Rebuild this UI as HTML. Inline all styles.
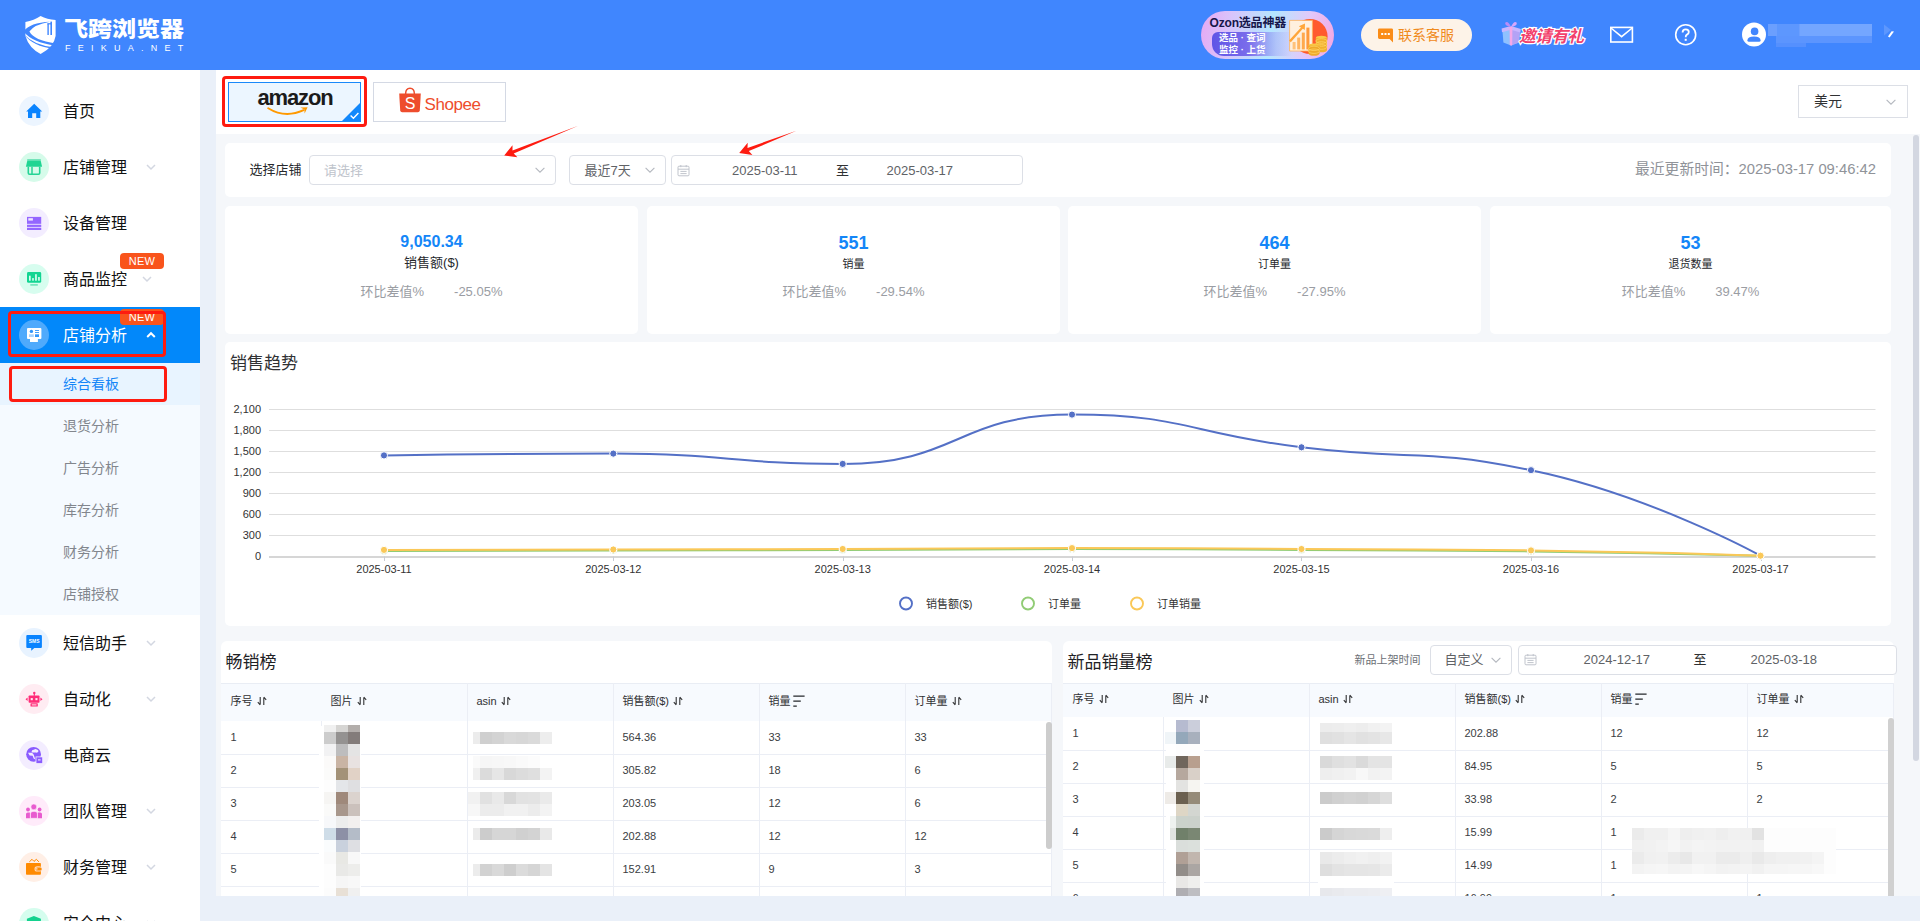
<!DOCTYPE html>
<html lang="zh-CN">
<head>
<meta charset="utf-8">
<title>飞跨浏览器 - 综合看板</title>
<style>
*{box-sizing:border-box;margin:0;padding:0}
html,body{width:1920px;height:921px;overflow:hidden}
body{position:relative;background:#eaf0f9;font-family:"Liberation Sans","Noto Sans CJK SC",sans-serif;color:#303133;font-size:13px}
.abs{position:absolute}
/* header */
#hd{position:absolute;left:0;top:0;width:1920px;height:70px;background:#4086fe}
#logo-cn{position:absolute;left:64px;top:12.2px;transform-origin:0 0;transform:scaleY(.875);font-size:24px;font-weight:900;color:#fff;letter-spacing:0;line-height:34px;white-space:nowrap;font-family:"Noto Sans CJK SC","Liberation Sans",sans-serif}
#logo-en{position:absolute;left:65px;top:40.5px;font-size:9px;color:#fff;letter-spacing:7.25px;line-height:14px;white-space:nowrap}
/* sidebar */
#sb{position:absolute;left:0;top:70px;width:200px;height:851px;background:#fff;overflow:hidden}
.mi{position:absolute;left:0;width:200px;height:56px}
.mi .ic{position:absolute;left:19px;top:13px;width:30px;height:30px;border-radius:50%}
.mi .ic svg{position:absolute;left:0;top:0;width:30px;height:30px}
.mi .tx{position:absolute;left:63px;top:17.3px;font-size:16px;line-height:24px;color:#111;white-space:nowrap}
.mi .ar{position:absolute;top:22px;width:12px;height:12px}
.mi.act{background:#0288fa}
.mi.act .tx{color:#fff}
.badge{position:absolute;left:120px;width:44px;height:16px;border-radius:4px;background:#f9541c;color:#fff;font-size:11px;line-height:16px;text-align:center;letter-spacing:.2px}
#sub{position:absolute;left:0;top:293px;width:200px;height:252px;background:#f5faff}
.si{position:absolute;left:0;width:200px;height:42px;font-size:14px;line-height:42px;padding-left:63px;color:#82868d;white-space:nowrap}
.si.on{background:#e8f4ff;color:#1486f8}
.redbox{position:absolute;border:3px solid #fe1b10;border-radius:4px}
/* content */
#ct{position:absolute;left:216px;top:70px;width:1704px;height:826px;background:#f5f7fa;overflow:hidden}
#tabs{position:absolute;left:0;top:0;width:1704px;height:64px;background:#fff}
.card{position:absolute;background:#fff;border-radius:5px}
.sel{position:absolute;border:1px solid #dcdfe6;border-radius:4px;background:#fff;height:30px;font-size:13px;line-height:29px;color:#606266;white-space:nowrap}
.sel .chev{position:absolute;top:8px;width:12px;height:12px}
.lbl{position:absolute;white-space:nowrap}
.th{position:absolute;font-size:11px;color:#303133;white-space:nowrap}
.td{position:absolute;font-size:11px;line-height:32px;height:33px;color:#3a3d42;white-space:nowrap}
.sic{display:inline-block;width:10px;height:10px;margin-left:4px;vertical-align:-1px}
.px{position:absolute;display:block}
</style>
</head>
<body>
<!-- ================= HEADER ================= -->
<div id="hd">
  <div id="logo-cn">飞跨浏览器</div>
  <div id="logo-en">FEIKUA.NET</div>
  <!--HD-START-->
  <svg class="abs" style="left:22px;top:14px;width:36px;height:42px" viewBox="0 0 36 42">
    <path d="M18.6 2 Q25 5.6 33.6 6 V22 Q32 33 18.6 40 Q7 34 3.4 22 L3.4 8 Q12 6.4 18.6 2 Z" fill="#fff"/>
    <path d="M1.6 17.4 Q8 8.6 28 7.8 Q12 10.6 7.4 17.6 Q12 26.4 33.6 29.6 L33.6 31.6 Q10 28.4 1.6 17.4 Z" fill="#4086fe"/>
    <path d="M2.2 20.6 Q12 31.6 33 33.6 L31.8 34.8 Q11 32.6 2.2 20.6 Z" fill="#4086fe"/>
    <rect x="25.4" y="9.6" width="1.4" height="11.4" fill="#4086fe"/><rect x="28.4" y="7.6" width="1.6" height="13.4" fill="#4086fe"/><rect x="25.4" y="9.2" width="4.4" height="1.2" fill="#4086fe"/>
  </svg>
  <!-- Ozon promo pill -->
  <div class="abs" style="left:1201px;top:11px;width:133px;height:48px;border-radius:24px;background:linear-gradient(100deg,#e6a8f3 0%,#d9c4fb 22%,#b4e6ff 52%,#e2c8fa 78%,#f5a6e0 100%);overflow:hidden">
    <div class="abs" style="left:8.6px;top:5px;font-size:12px;font-weight:700;line-height:15px;color:#17174a;white-space:nowrap;letter-spacing:-.2px">Ozon选品神器</div>
    <div class="abs" style="left:11px;top:21px;width:80px;height:24px;border-radius:6px 0 0 12px;background:linear-gradient(90deg,#5f55e6 0%,#7a6ceb 45%,rgba(150,140,240,.35) 80%,rgba(180,170,250,0) 100%)"></div>
    <div class="abs" style="left:18px;top:21px;font-size:9.5px;font-weight:700;line-height:11.5px;color:#fff;white-space:nowrap">选品 · 查词<br>监控 · 上货</div>
    <svg class="abs" style="left:86px;top:6px;width:46px;height:42px" viewBox="0 0 46 42">
      <circle cx="23" cy="19.5" r="17.6" fill="#ff5a2e"/>
      <path d="M2.6 3.4 H25.4 V34 H2.6 Z" fill="#fff0de"/><path d="M2.6 3.4 H25.4 V34 H2.6 Z" fill="none" stroke="#ffb25a" stroke-width=".8"/>
      <rect x="5.6" y="25" width="3" height="7.4" fill="#ffc27a"/><rect x="10.2" y="20.6" width="3" height="11.8" fill="#ffb562"/><rect x="14.8" y="15.6" width="3" height="16.8" fill="#ffa94d"/><rect x="19.4" y="10.6" width="3" height="21.8" fill="#ff9a3c"/>
      <path d="M2 23.6 L14 10.4 L11.8 9.2 L18 6.6 L17.8 13 L15.8 11.8 L3.8 25.2 Z" fill="#ffa63a"/>
      <ellipse cx="34.4" cy="21" rx="5.6" ry="2.3" fill="#f9c846"/><rect x="28.8" y="21" width="11.2" height="12" fill="#f2b02e"/><ellipse cx="34.4" cy="33" rx="5.6" ry="2.3" fill="#f2b02e"/><ellipse cx="34.4" cy="24" rx="5.6" ry="2.3" fill="none" stroke="#ffd768" stroke-width=".7"/><ellipse cx="34.4" cy="27" rx="5.6" ry="2.3" fill="none" stroke="#ffd768" stroke-width=".7"/><ellipse cx="34.4" cy="30" rx="5.6" ry="2.3" fill="none" stroke="#ffd768" stroke-width=".7"/>
      <ellipse cx="27" cy="28.6" rx="5.5" ry="2.2" fill="#f9c846"/><rect x="21.5" y="28.6" width="11" height="8" fill="#efaa2a"/><ellipse cx="27" cy="36.6" rx="5.5" ry="2.2" fill="#efaa2a"/><ellipse cx="27" cy="31.4" rx="5.5" ry="2.2" fill="none" stroke="#ffd768" stroke-width=".7"/><ellipse cx="27" cy="34.2" rx="5.5" ry="2.2" fill="none" stroke="#ffd768" stroke-width=".7"/>
    </svg>
  </div>
  <!-- contact pill -->
  <div class="abs" style="left:1361px;top:19px;width:111px;height:32px;border-radius:16px;background:#fdf3e8">
    <svg class="abs" style="left:16px;top:8px;width:18px;height:17px" viewBox="0 0 18 17"><path d="M2.4 1.4 H14.6 Q16 1.4 16 2.8 V15.4 L12.6 12 H2.4 Q1 12 1 10.6 V2.8 Q1 1.4 2.4 1.4 Z" fill="#fa8c16"/><rect x="4.2" y="6" width="2" height="2" fill="#fff"/><rect x="7.5" y="6" width="2" height="2" fill="#fff"/><rect x="10.8" y="6" width="2" height="2" fill="#fff"/></svg>
    <div class="abs" style="left:37px;top:6px;font-size:14px;line-height:20px;color:#f08a1c;white-space:nowrap">联系客服</div>
  </div>
  <!-- invite -->
  <svg class="abs" style="left:1499px;top:20px;width:24px;height:28px" viewBox="0 0 24 28">
    <path d="M3.4 10 L12 7.6 L21 10.4 L20 22.6 L12 25.6 L4.4 22.6 Z" fill="#8fc1ff"/>
    <path d="M12 7.6 L21 10.4 L20 22.6 L12 25.6 Z" fill="#b4a2f5"/>
    <path d="M2.6 8.6 L12 6 L21.8 9 L21.4 12.4 L12 9.8 L3 12.2 Z" fill="#c9b6ff"/>
    <path d="M10.6 7 L13.4 7 L13.2 25.4 L10.8 25.2 Z" fill="#f5a8e8"/>
    <path d="M12 7 Q5 6 6.4 2.6 Q9 0.6 12 7 Z" fill="#b98cf7"/><path d="M12 7 Q19 6 17.6 2.6 Q15 0.6 12 7 Z" fill="#d7a6fb"/>
  </svg>
  <div class="abs" style="left:1519px;top:23px;font-size:16.5px;line-height:24px;font-weight:700;font-style:italic;color:#fff;white-space:nowrap;letter-spacing:-.3px;font-family:'Noto Sans CJK SC','Liberation Sans',sans-serif;-webkit-text-stroke:2.4px #fff">邀请有礼</div>
  <div class="abs" style="left:1519px;top:23px;font-size:16.5px;line-height:24px;font-weight:700;font-style:italic;color:#f2416c;white-space:nowrap;letter-spacing:-.3px;font-family:'Noto Sans CJK SC','Liberation Sans',sans-serif">邀请有礼</div>
  <!-- mail -->
  <svg class="abs" style="left:1609px;top:25px;width:26px;height:20px" viewBox="0 0 26 20"><rect x="1.8" y="2.4" width="21.6" height="14.6" fill="none" stroke="#fff" stroke-width="1.6"/><path d="M2 3 L12.6 11.6 L23.2 3" fill="none" stroke="#fff" stroke-width="1.6"/></svg>
  <!-- help -->
  <svg class="abs" style="left:1673px;top:22px;width:26px;height:26px" viewBox="0 0 26 26"><circle cx="12.7" cy="12.7" r="10" fill="none" stroke="#fff" stroke-width="1.6"/><path d="M9.6 10.4 Q9.6 7.4 12.7 7.4 Q15.8 7.4 15.8 10 Q15.8 11.6 14 12.6 Q12.7 13.4 12.7 15.2" fill="none" stroke="#fff" stroke-width="1.8"/><rect x="11.7" y="16.8" width="2" height="2" fill="#fff"/></svg>
  <!-- avatar -->
  <svg class="abs" style="left:1741px;top:22px;width:26px;height:26px" viewBox="0 0 26 26"><circle cx="13" cy="12.6" r="12" fill="#fff"/><circle cx="13.6" cy="9.4" r="3.8" fill="#4086fe"/><path d="M6.4 18.4 Q6.4 14.4 13 14.4 Q19.6 14.4 19.6 18.4 Q19.6 19.8 18 19.8 H8 Q6.4 19.8 6.4 18.4 Z" fill="#4086fe"/></svg>
  <!-- blurred user name (mosaic) -->
  <div class="abs" style="left:1768px;top:24px;width:104px;height:12px;background:#6b9ffe"></div>
  <div class="abs" style="left:1777px;top:24px;width:22px;height:12px;background:#5d97fe"></div>
  <div class="abs" style="left:1800px;top:24px;width:72px;height:12px;background:#74a6ff"></div>
  <div class="abs" style="left:1776px;top:36px;width:96px;height:7px;background:#5c95fe"></div>
  <div class="abs" style="left:1776px;top:43px;width:30px;height:4px;background:#5590fe"></div>
  <svg class="abs" style="left:1883px;top:23px;width:12px;height:16px" viewBox="0 0 12 16"><path d="M1 1.4 L8 7 L1 12.6 Z" fill="#5d97fe"/><path d="M5 13.6 L8.6 8.2 L11 8.6 L6.6 14.6 Z" fill="#fff"/></svg>
  <!--HD-END-->
</div>

<!-- ================= SIDEBAR ================= -->
<div id="sb">
  <!--SB-START-->
  <div class="mi" style="top:13px">
    <div class="ic" style="background:#ecf5ff"><svg viewBox="0 0 30 30"><path d="M15.2 7.8 L23.2 15.4 H21.3 V22 H17.2 V17.2 H13.2 V22 H9 V15.4 H7.2 Z" fill="#0a84ff"/></svg></div>
    <div class="tx">首页</div>
  </div>
  <div class="mi" style="top:69px">
    <div class="ic" style="background:#d6fbea"><svg viewBox="0 0 30 30"><path d="M8.2 7.2 H21.8 V8.8 H8.2 Z" fill="#5ddfae"/><path d="M8.3 8.8 H21.7 L23.1 14.7 H6.9 Z" fill="#1fd592"/><path d="M9.3 14.7 V21 Q9.3 22.2 10.5 22.2 H19.5 Q20.7 22.2 20.7 21 V14.7" fill="none" stroke="#25d495" stroke-width="1.6"/><path d="M13 14.7 V22" stroke="#25d495" stroke-width="1.5" fill="none"/></svg></div>
    <div class="tx">店铺管理</div>
    <svg class="ar" style="left:145px" viewBox="0 0 12 12"><path d="M2 4 L6 8 L10 4" fill="none" stroke="#d3d7e1" stroke-width="1.5"/></svg>
  </div>
  <div class="mi" style="top:125px">
    <div class="ic" style="background:#f3edff"><svg viewBox="0 0 30 30"><rect x="8" y="8.9" width="14.2" height="7" fill="#9466ff"/><rect x="9.3" y="10.2" width="4.6" height="2.4" fill="#efe6ff"/><rect x="8" y="15.9" width="14.2" height="6.1" fill="#d9c8ff"/><rect x="8" y="17" width="14.2" height="1.9" fill="#9466ff"/><rect x="8" y="20" width="14.2" height="2" fill="#9466ff"/></svg></div>
    <div class="tx">设备管理</div>
  </div>
  <div class="mi" style="top:181px">
    <div class="ic" style="background:#d7fdef"><svg viewBox="0 0 30 30"><rect x="8" y="8" width="14.2" height="10.8" rx="1.4" fill="#13d592"/><rect x="10" y="11.7" width="1.7" height="5" fill="#d7fdef"/><rect x="13.2" y="14.1" width="1.6" height="2.6" fill="#d7fdef"/><rect x="16.1" y="10.2" width="1.7" height="6.5" fill="#d7fdef"/><rect x="19.1" y="13" width="1.7" height="3.7" fill="#d7fdef"/><rect x="11.3" y="20.1" width="7.5" height="1.6" fill="#6fe3b9"/></svg></div>
    <div class="tx">商品监控</div>
    <svg class="ar" style="left:141px" viewBox="0 0 12 12"><path d="M2 4 L6 8 L10 4" fill="none" stroke="#d3d7e1" stroke-width="1.5"/></svg>
    <div class="badge" style="top:2px">NEW</div>
  </div>
  <div class="mi act" style="top:237px">
    <div class="ic" style="background:#4faafc"><svg viewBox="0 0 30 30"><rect x="8" y="8" width="14.4" height="11.1" rx="1" fill="#fff"/><rect x="11" y="19" width="7.9" height="3" fill="#fff"/><circle cx="12.4" cy="11.4" r="1.7" fill="#2f96fb"/><rect x="16" y="10" width="4" height=".9" fill="#2f96fb"/><rect x="16" y="12" width="4" height=".9" fill="#2f96fb"/><rect x="10" y="14.3" width="4.8" height="2.7" fill="#a8d2fd"/><rect x="16" y="14.3" width="4" height="2.7" fill="#2f96fb"/></svg></div>
    <div class="tx">店铺分析</div>
    <svg class="ar" style="left:145px" viewBox="0 0 12 12"><path d="M2.2 8 L6 4.2 L9.8 8" fill="none" stroke="#fff" stroke-width="2"/></svg>
  </div>
  <div class="badge" style="top:238.8px;height:16px;line-height:17px;border-radius:4px">NEW</div>
  <div id="sub">
    <div class="si on" style="top:0">综合看板</div>
    <div class="si" style="top:42px">退货分析</div>
    <div class="si" style="top:84px">广告分析</div>
    <div class="si" style="top:126px">库存分析</div>
    <div class="si" style="top:168px">财务分析</div>
    <div class="si" style="top:210px">店铺授权</div>
  </div>
  <div class="mi" style="top:545px">
    <div class="ic" style="background:#e8f3ff"><svg viewBox="0 0 30 30"><path d="M8.3 7 H21.9 Q22.9 7 22.9 8 V19 Q22.9 20 21.9 20 H15.3 L12.2 22.7 V20 H8.3 Q7.3 20 7.3 19 V8 Q7.3 7 8.3 7 Z" fill="#0a84ff"/><text x="15.1" y="15.2" font-size="5" font-weight="700" text-anchor="middle" fill="#fff" font-family="Liberation Sans, sans-serif">SMS</text></svg></div>
    <div class="tx">短信助手</div>
    <svg class="ar" style="left:145px" viewBox="0 0 12 12"><path d="M2 4 L6 8 L10 4" fill="none" stroke="#d3d7e1" stroke-width="1.5"/></svg>
  </div>
  <div class="mi" style="top:601px">
    <div class="ic" style="background:#ffecf2"><svg viewBox="0 0 30 30"><circle cx="15.3" cy="8.9" r="1.2" fill="#ff2d78"/><rect x="14.7" y="9.4" width="1.2" height="2.4" fill="#ff2d78"/><rect x="9.6" y="11.5" width="10.9" height="7.3" rx=".8" fill="#ff2d78"/><path d="M8.6 13.4 L6.5 15.2 L8.6 17 Z M21.4 13.4 L23.5 15.2 L21.4 17 Z" fill="#ff2d78"/><rect x="11.7" y="14.1" width="2.1" height="2.1" fill="#ffecf2"/><rect x="16.4" y="14.1" width="2.1" height="2.1" fill="#ffecf2"/><rect x="11.5" y="19.3" width="7.3" height="3.2" rx=".6" fill="#ff2d78"/><rect x="12.8" y="20.4" width="4.7" height="1" fill="#ffecf2"/></svg></div>
    <div class="tx">自动化</div>
    <svg class="ar" style="left:145px" viewBox="0 0 12 12"><path d="M2 4 L6 8 L10 4" fill="none" stroke="#d3d7e1" stroke-width="1.5"/></svg>
  </div>
  <div class="mi" style="top:657px">
    <div class="ic" style="background:#f3edff"><svg viewBox="0 0 30 30"><circle cx="14.6" cy="14.3" r="7.4" fill="#8a5cff"/><path d="M12.6 11.6 Q12.8 9.6 15 9.8 Q16 8.4 17.8 9.4 Q19.8 9.6 19.4 11.6 Q19 12.8 17 12.6 H13.6 Q12.6 12.6 12.6 11.6 Z" fill="#f3edff"/><path d="M9 12.8 L13 12.8 L14.6 14.4 L16.4 19.4 L14.6 18.6 L13.6 15.8 L10.6 15.6 Z" fill="#f3edff"/><rect x="16.6" y="16.5" width="6.8" height="6.8" fill="#f3edff"/><rect x="17.4" y="17.3" width="5.8" height="5.8" fill="#8a5cff"/><rect x="19" y="19.3" width="2.6" height="1.2" fill="#e9deff"/></svg></div>
    <div class="tx">电商云</div>
  </div>
  <div class="mi" style="top:713px">
    <div class="ic" style="background:#ffebfa"><svg viewBox="0 0 30 30"><circle cx="9" cy="13.5" r="1.9" fill="#e85ccf"/><circle cx="20.6" cy="13.5" r="1.9" fill="#e85ccf"/><path d="M7 22.3 V18 Q7 16.4 8.8 16.4 H10.9 V22.3 Z M23 22.3 V18 Q23 16.4 21.2 16.4 H18.9 V22.3 Z" fill="#e85ccf"/><circle cx="14.8" cy="10.9" r="2.9" fill="#e85ccf" stroke="#ffebfa" stroke-width=".6"/><path d="M11.5 22.3 V17.8 Q11.5 15.4 14 15.4 H15.8 Q18.4 15.4 18.4 17.8 V22.3 Z" fill="#e85ccf" stroke="#ffebfa" stroke-width=".6"/></svg></div>
    <div class="tx">团队管理</div>
    <svg class="ar" style="left:145px" viewBox="0 0 12 12"><path d="M2 4 L6 8 L10 4" fill="none" stroke="#d3d7e1" stroke-width="1.5"/></svg>
  </div>
  <div class="mi" style="top:769px">
    <div class="ic" style="background:#ffefe6"><svg viewBox="0 0 30 30"><path d="M10.3 9.9 L13 7.3 L15 9.4 L17.4 7.3 L19.9 9.9" fill="none" stroke="#ff8a00" stroke-width="1"/><rect x="7" y="11" width="14.9" height="11.7" rx=".8" fill="#ff8a00"/><rect x="15.5" y="14.3" width="7.2" height="5.2" rx="2.6" fill="#ffd9b8"/><rect x="16.6" y="15.4" width="6.1" height="3" rx="1.5" fill="#ff8a00"/><circle cx="17.8" cy="16.9" r=".8" fill="#ffd9b8"/></svg></div>
    <div class="tx">财务管理</div>
    <svg class="ar" style="left:145px" viewBox="0 0 12 12"><path d="M2 4 L6 8 L10 4" fill="none" stroke="#d3d7e1" stroke-width="1.5"/></svg>
  </div>
  <div class="mi" style="top:825px">
    <div class="ic" style="background:#d5fdee"><svg viewBox="0 0 30 30"><path d="M14.9 7.9 L21.9 10.8 V16 Q21.9 20.4 14.9 22.8 Q7.9 20.4 7.9 16 V10.8 Z" fill="#14d18e"/></svg></div>
    <div class="tx">安全中心</div>
    <svg class="ar" style="left:145px" viewBox="0 0 12 12"><path d="M2 4 L6 8 L10 4" fill="none" stroke="#d3d7e1" stroke-width="1.5"/></svg>
  </div>
  <div class="redbox" style="left:7.6px;top:241.2px;width:158.8px;height:46px"></div>
  <div class="redbox" style="left:8.8px;top:295.6px;width:158.6px;height:36.6px"></div>
  <!--SB-END-->
</div>

<!-- ================= CONTENT ================= -->
<div id="ct">
  <div id="tabs"></div>
  <!--CT-START-->
  <div class="abs" style="left:12px;top:12px;width:133px;height:40px;border:1px solid #1989fa;background:#ecf6ff;overflow:hidden">
    <div class="abs" id="amz" style="left:28.4px;top:2px;font-size:22px;font-weight:700;line-height:26px;color:#1b1b1b;letter-spacing:-1.1px;white-space:nowrap;transform-origin:0 0;transform:scaleX(1)">amazon</div>
    <svg class="abs" style="left:37.2px;top:23.3px;width:46px;height:11px" viewBox="0 0 46 11"><path d="M2.2 2.2 Q19 12.6 37.6 4.2" fill="none" stroke="#ff9900" stroke-width="1.9" stroke-linecap="round"/><path d="M34.4 1.6 L41.6 1.2 L38.6 7.4 L38.4 3.6 Z" fill="#ff9900"/></svg>
    <svg class="abs" style="right:-1px;bottom:-1px;width:20px;height:20px" viewBox="0 0 20 20"><path d="M20 0 V20 H0 Z" fill="#1288fb"/><path d="M9.6 13.6 L12.4 16.2 L17.4 11" fill="none" stroke="#fff" stroke-width="1.4"/></svg>
  </div>
  <div class="abs" style="left:157px;top:12px;width:133px;height:40px;border:1px solid #d4d9e4;background:#fff">
    <svg class="abs" style="left:22.6px;top:3.3px;width:26px;height:28px" viewBox="0 0 26 28"><path d="M8.6 8 Q8.6 2.2 13 2.2 Q17.4 2.2 17.4 8" fill="none" stroke="#ee4d2d" stroke-width="1.5"/><path d="M2.2 7.4 H23.8 L22.8 24.4 Q22.6 26.2 20.8 26.2 H5.2 Q3.4 26.2 3.2 24.4 Z" fill="#ee4d2d"/><text x="13" y="22.6" font-size="16" text-anchor="middle" fill="#fff" font-family="Liberation Sans, sans-serif">S</text></svg>
    <div class="abs" id="shp" style="left:50.6px;top:9.2px;font-size:17px;line-height:26px;color:#ee4d2d;white-space:nowrap;letter-spacing:-.45px">Shopee</div>
  </div>
  <div class="redbox" style="left:5.6px;top:6px;width:145px;height:50.5px"></div>
  <div class="sel" style="left:1582px;top:15px;width:110px;height:33px;border-radius:0;line-height:31px;font-size:14px;color:#303133;padding-left:15px">美元<svg class="chev" style="left:86px;top:10px" viewBox="0 0 12 12"><path d="M1.6 3.8 L6 8.2 L10.4 3.8" fill="none" stroke="#b4b8bf" stroke-width="1.1"/></svg></div>
  <div class="card" style="left:9px;top:73px;width:1666px;height:54px"></div>
  <div class="lbl" style="left:33.5px;top:90px;font-size:13px;line-height:20px;color:#26282c">选择店铺</div>
  <div class="sel" style="left:93px;top:85px;width:247px;padding-left:14px;color:#c0c4cc">请选择<svg class="chev" style="left:224px" viewBox="0 0 12 12"><path d="M1.6 3.8 L6 8.2 L10.4 3.8" fill="none" stroke="#b4b8bf" stroke-width="1.1"/></svg></div>
  <div class="sel" style="left:353px;top:85px;width:97px;padding-left:14.5px">最近7天<svg class="chev" style="left:74px" viewBox="0 0 12 12"><path d="M1.6 3.8 L6 8.2 L10.4 3.8" fill="none" stroke="#b4b8bf" stroke-width="1.1"/></svg></div>
  <div class="sel" style="left:455px;top:85px;width:352px"><svg class="abs" style="left:4.6px;top:7.6px;width:13px;height:13px" viewBox="0 0 13 13"><rect x="1" y="2.2" width="11" height="9.6" rx="1" fill="none" stroke="#c0c4cc" stroke-width="1"/><path d="M1 5.2 H12 M3.8 1 V3.2 M9.2 1 V3.2 M3.4 7.4 H9.6 M3.4 9.6 H9.6" stroke="#c0c4cc" stroke-width="1" fill="none"/></svg><span class="abs" style="left:60px;top:0">2025-03-11</span><span class="abs" style="left:164px;top:0;color:#303133">至</span><span class="abs" style="left:214.5px;top:0">2025-03-17</span></div>
  <div class="lbl" style="right:44px;top:89px;font-size:14.8px;line-height:20px;color:#909399">最近更新时间：2025-03-17 09:46:42</div>
  <div class="card" style="left:9px;top:136px;width:413px;height:128px;text-align:center">
    <div class="abs" style="left:0;width:100%;top:23.5px;font-size:16px;font-weight:700;line-height:24px;color:#1486f8">9,050.34</div>
    <div class="abs" style="left:0;width:100%;top:47px;font-size:13px;line-height:20px;color:#26282c">销售额($)</div>
    <div class="abs" style="left:0;width:100%;top:76px;font-size:13px;line-height:20px;color:#9a9da3;white-space:nowrap"><span>环比差值%</span><span style="display:inline-block;width:30px"></span><span>-25.05%</span></div>
  </div>
  <div class="card" style="left:431px;top:136px;width:413px;height:128px;text-align:center">
    <div class="abs" style="left:0;width:100%;top:24.5px;font-size:18px;font-weight:700;line-height:24px;color:#1486f8">551</div>
    <div class="abs" style="left:0;width:100%;top:48px;font-size:11px;line-height:20px;color:#26282c">销量</div>
    <div class="abs" style="left:0;width:100%;top:76px;font-size:13px;line-height:20px;color:#9a9da3;white-space:nowrap"><span>环比差值%</span><span style="display:inline-block;width:30px"></span><span>-29.54%</span></div>
  </div>
  <div class="card" style="left:852px;top:136px;width:413px;height:128px;text-align:center">
    <div class="abs" style="left:0;width:100%;top:24.5px;font-size:18px;font-weight:700;line-height:24px;color:#1486f8">464</div>
    <div class="abs" style="left:0;width:100%;top:48px;font-size:11px;line-height:20px;color:#26282c">订单量</div>
    <div class="abs" style="left:0;width:100%;top:76px;font-size:13px;line-height:20px;color:#9a9da3;white-space:nowrap"><span>环比差值%</span><span style="display:inline-block;width:30px"></span><span>-27.95%</span></div>
  </div>
  <div class="card" style="left:1274px;top:136px;width:401px;height:128px;text-align:center">
    <div class="abs" style="left:0;width:100%;top:24.5px;font-size:18px;font-weight:700;line-height:24px;color:#1486f8">53</div>
    <div class="abs" style="left:0;width:100%;top:48px;font-size:11px;line-height:20px;color:#26282c">退货数量</div>
    <div class="abs" style="left:0;width:100%;top:76px;font-size:13px;line-height:20px;color:#9a9da3;white-space:nowrap"><span>环比差值%</span><span style="display:inline-block;width:30px"></span><span>39.47%</span></div>
  </div>
  <svg class="abs" style="left:0;top:0;width:900px;height:200px;z-index:50;pointer-events:none" viewBox="216 70 900 200"><!--ARROWS--><path d="M578.3 125.8 L512.5 150.4 L512.5 145.2 L504.2 155.5 L517.4 157.2 L513.7 153.5 Z" fill="#fe1b10"/><path d="M796.5 130.8 L747.5 147.9 L747.7 142.7 L739.2 153.0 L752.4 154.9 L748.8 151.1 Z" fill="#fe1b10"/></svg>
  <div class="card" style="left:9px;top:272px;width:1666px;height:284px">
  <div class="lbl" style="left:5px;top:9.5px;font-size:17px;line-height:24px;color:#303133">销售趋势</div>
  <svg class="abs" style="left:0;top:0" width="1666" height="284" viewBox="0 0 1666 284" font-family="Liberation Sans, Noto Sans CJK SC, sans-serif" font-size="11">
  <path d="M44 67.5 H1650.5" stroke="#dedede" stroke-width="1"/>
  <text x="36" y="70.7" text-anchor="end" fill="#333">2,100</text>
  <path d="M44 88.5 H1650.5" stroke="#dedede" stroke-width="1"/>
  <text x="36" y="91.7" text-anchor="end" fill="#333">1,800</text>
  <path d="M44 109.5 H1650.5" stroke="#dedede" stroke-width="1"/>
  <text x="36" y="112.7" text-anchor="end" fill="#333">1,500</text>
  <path d="M44 130.5 H1650.5" stroke="#dedede" stroke-width="1"/>
  <text x="36" y="133.7" text-anchor="end" fill="#333">1,200</text>
  <path d="M44 151.5 H1650.5" stroke="#dedede" stroke-width="1"/>
  <text x="36" y="154.7" text-anchor="end" fill="#333">900</text>
  <path d="M44 172.5 H1650.5" stroke="#dedede" stroke-width="1"/>
  <text x="36" y="175.7" text-anchor="end" fill="#333">600</text>
  <path d="M44 193.5 H1650.5" stroke="#dedede" stroke-width="1"/>
  <text x="36" y="196.7" text-anchor="end" fill="#333">300</text>
  <path d="M44 215.0 H1650.5" stroke="#d6d6d6" stroke-width="2"/>
  <text x="36" y="217.7" text-anchor="end" fill="#333">0</text>
  <path d="M159.5 214.5 V219" stroke="#c9ccd3" stroke-width="1"/>
  <text x="159" y="231" text-anchor="middle" fill="#333">2025-03-11</text>
  <path d="M388.5 214.5 V219" stroke="#c9ccd3" stroke-width="1"/>
  <text x="388.29999999999995" y="231" text-anchor="middle" fill="#333">2025-03-12</text>
  <path d="M618.5 214.5 V219" stroke="#c9ccd3" stroke-width="1"/>
  <text x="617.7" y="231" text-anchor="middle" fill="#333">2025-03-13</text>
  <path d="M847.5 214.5 V219" stroke="#c9ccd3" stroke-width="1"/>
  <text x="847" y="231" text-anchor="middle" fill="#333">2025-03-14</text>
  <path d="M1076.5 214.5 V219" stroke="#c9ccd3" stroke-width="1"/>
  <text x="1076.5" y="231" text-anchor="middle" fill="#333">2025-03-15</text>
  <path d="M1306.5 214.5 V219" stroke="#c9ccd3" stroke-width="1"/>
  <text x="1306" y="231" text-anchor="middle" fill="#333">2025-03-16</text>
  <path d="M1536.5 214.5 V219" stroke="#c9ccd3" stroke-width="1"/>
  <text x="1535.5" y="231" text-anchor="middle" fill="#333">2025-03-17</text>
  <path d="M159.0 113.4 C159.0 113.4 273.7 111.6 388.3 111.6 C503.1 111.6 504.2 121.9 617.7 121.9 C733.6 121.9 731.6 72.6 847.0 72.6 C961.0 72.6 961.5 91.4 1076.5 105.3 C1191.0 119.2 1194.7 105.3 1306.0 128.2 C1424.2 152.5 1535.5 213.7 1535.5 213.7" fill="none" stroke="#5470c6" stroke-width="2" stroke-linejoin="round"/>
  <circle cx="159.0" cy="113.4" r="3.6" fill="#5470c6" stroke="#fff" stroke-width="1"/>
  <circle cx="388.3" cy="111.6" r="3.6" fill="#5470c6" stroke="#fff" stroke-width="1"/>
  <circle cx="617.7" cy="121.9" r="3.6" fill="#5470c6" stroke="#fff" stroke-width="1"/>
  <circle cx="847.0" cy="72.6" r="3.6" fill="#5470c6" stroke="#fff" stroke-width="1"/>
  <circle cx="1076.5" cy="105.3" r="3.6" fill="#5470c6" stroke="#fff" stroke-width="1"/>
  <circle cx="1306.0" cy="128.2" r="3.6" fill="#5470c6" stroke="#fff" stroke-width="1"/>
  <circle cx="1535.5" cy="213.7" r="3.6" fill="#5470c6" stroke="#fff" stroke-width="1"/>
  <path d="M159.0 208.9 C159.0 208.9 273.7 208.7 388.3 208.5 C503.0 208.3 503.0 208.4 617.7 208.0 C732.4 207.7 732.3 207.1 847.0 207.1 C961.7 207.1 961.8 207.4 1076.5 208.0 C1191.3 208.6 1191.3 208.0 1306.0 209.4 C1420.8 210.8 1535.5 213.7 1535.5 213.7" fill="none" stroke="#91cc75" stroke-width="2" stroke-linejoin="round"/>
  <circle cx="159.0" cy="208.9" r="3.6" fill="#91cc75" stroke="#fff" stroke-width="1"/>
  <circle cx="388.3" cy="208.5" r="3.6" fill="#91cc75" stroke="#fff" stroke-width="1"/>
  <circle cx="617.7" cy="208.0" r="3.6" fill="#91cc75" stroke="#fff" stroke-width="1"/>
  <circle cx="847.0" cy="207.1" r="3.6" fill="#91cc75" stroke="#fff" stroke-width="1"/>
  <circle cx="1076.5" cy="208.0" r="3.6" fill="#91cc75" stroke="#fff" stroke-width="1"/>
  <circle cx="1306.0" cy="209.4" r="3.6" fill="#91cc75" stroke="#fff" stroke-width="1"/>
  <circle cx="1535.5" cy="213.7" r="3.6" fill="#91cc75" stroke="#fff" stroke-width="1"/>
  <path d="M159.0 207.9 C159.0 207.9 273.7 207.7 388.3 207.5 C503.0 207.3 503.0 207.4 617.7 207.0 C732.4 206.7 732.3 206.1 847.0 206.1 C961.7 206.1 961.8 206.4 1076.5 207.0 C1191.3 207.6 1191.3 207.0 1306.0 208.4 C1420.8 209.8 1535.5 213.7 1535.5 213.7" fill="none" stroke="#fac858" stroke-width="2" stroke-linejoin="round"/>
  <circle cx="159.0" cy="207.9" r="3.6" fill="#fac858" stroke="#fff" stroke-width="1"/>
  <circle cx="388.3" cy="207.5" r="3.6" fill="#fac858" stroke="#fff" stroke-width="1"/>
  <circle cx="617.7" cy="207.0" r="3.6" fill="#fac858" stroke="#fff" stroke-width="1"/>
  <circle cx="847.0" cy="206.1" r="3.6" fill="#fac858" stroke="#fff" stroke-width="1"/>
  <circle cx="1076.5" cy="207.0" r="3.6" fill="#fac858" stroke="#fff" stroke-width="1"/>
  <circle cx="1306.0" cy="208.4" r="3.6" fill="#fac858" stroke="#fff" stroke-width="1"/>
  <circle cx="1535.5" cy="213.7" r="3.6" fill="#fac858" stroke="#fff" stroke-width="1"/>
  <circle cx="681" cy="261.5" r="6" fill="#fff" stroke="#5470c6" stroke-width="1.9"/>
  <text x="701" y="265.5" fill="#333">销售额($)</text>
  <circle cx="803" cy="261.5" r="6" fill="#fff" stroke="#91cc75" stroke-width="1.9"/>
  <text x="823" y="265.5" fill="#333">订单量</text>
  <circle cx="912" cy="261.5" r="6" fill="#fff" stroke="#fac858" stroke-width="1.9"/>
  <text x="932" y="265.5" fill="#333">订单销量</text>
  </svg>
  </div>
  <div class="card" style="left:5px;top:571px;width:831px;height:259px;border-radius:6px 6px 0 0;overflow:visible">
  <div class="lbl" style="left:4.5px;top:10.299999999999955px;font-size:17px;line-height:24px;color:#1f2226">畅销榜</div>
  
  <div class="abs" style="left:0;top:42px;width:831px;height:38px;background:#f7fafe;border-top:1px solid #e9edf4"></div>
  <div class="th" style="left:9.5px;top:42px;height:38px;line-height:37px">序号<svg class="sic" viewBox="0 0 10 10"><path d="M3.2 1 V8.6 M0.8 6.2 L3.2 8.8 M6.8 9 V1.4 M6.8 1.2 L9.2 3.8" fill="none" stroke="#303133" stroke-width="1.1"/></svg></div>
  <div class="th" style="left:109.5px;top:42px;height:38px;line-height:37px">图片<svg class="sic" viewBox="0 0 10 10"><path d="M3.2 1 V8.6 M0.8 6.2 L3.2 8.8 M6.8 9 V1.4 M6.8 1.2 L9.2 3.8" fill="none" stroke="#303133" stroke-width="1.1"/></svg></div>
  <div class="th" style="left:255.5px;top:42px;height:38px;line-height:37px">asin<svg class="sic" viewBox="0 0 10 10"><path d="M3.2 1 V8.6 M0.8 6.2 L3.2 8.8 M6.8 9 V1.4 M6.8 1.2 L9.2 3.8" fill="none" stroke="#303133" stroke-width="1.1"/></svg></div>
  <div class="th" style="left:401.5px;top:42px;height:38px;line-height:37px">销售额($)<svg class="sic" viewBox="0 0 10 10"><path d="M3.2 1 V8.6 M0.8 6.2 L3.2 8.8 M6.8 9 V1.4 M6.8 1.2 L9.2 3.8" fill="none" stroke="#303133" stroke-width="1.1"/></svg></div>
  <div class="th" style="left:547.5px;top:42px;height:38px;line-height:37px">销量<svg class="sic" style="width:12px;height:12px;margin-left:2.4px;vertical-align:-2.4px" viewBox="0 0 12 12"><path d="M0.3 1 H11.6 M0.3 6 H7.8 M0.3 11 H3.8" fill="none" stroke="#26282c" stroke-width="1.25"/></svg></div>
  <div class="th" style="left:693.5px;top:42px;height:38px;line-height:37px">订单量<svg class="sic" viewBox="0 0 10 10"><path d="M3.2 1 V8.6 M0.8 6.2 L3.2 8.8 M6.8 9 V1.4 M6.8 1.2 L9.2 3.8" fill="none" stroke="#303133" stroke-width="1.1"/></svg></div>
  <div class="abs" style="left:100px;top:80px;width:1px;height:179px;background:#ebeef5"></div>
  <div class="abs" style="left:246px;top:42px;width:1px;height:217px;background:#ebeef5"></div>
  <div class="abs" style="left:392px;top:42px;width:1px;height:217px;background:#ebeef5"></div>
  <div class="abs" style="left:538px;top:42px;width:1px;height:217px;background:#ebeef5"></div>
  <div class="abs" style="left:684px;top:42px;width:1px;height:217px;background:#ebeef5"></div>
  <div class="abs" style="left:830px;top:42px;width:1px;height:217px;background:#ebeef5"></div>
  <div class="abs" style="left:0;top:113px;width:831px;height:1px;background:#ebeef5"></div>
  <div class="td" style="left:9.5px;top:80px">1</div>
  <div class="td" style="left:401.5px;top:80px">564.36</div>
  <div class="td" style="left:547.5px;top:80px">33</div>
  <div class="td" style="left:693.5px;top:80px">33</div>
  <div class="abs" style="left:0;top:146px;width:831px;height:1px;background:#ebeef5"></div>
  <div class="td" style="left:9.5px;top:113px">2</div>
  <div class="td" style="left:401.5px;top:113px">305.82</div>
  <div class="td" style="left:547.5px;top:113px">18</div>
  <div class="td" style="left:693.5px;top:113px">6</div>
  <div class="abs" style="left:0;top:179px;width:831px;height:1px;background:#ebeef5"></div>
  <div class="td" style="left:9.5px;top:146px">3</div>
  <div class="td" style="left:401.5px;top:146px">203.05</div>
  <div class="td" style="left:547.5px;top:146px">12</div>
  <div class="td" style="left:693.5px;top:146px">6</div>
  <div class="abs" style="left:0;top:212px;width:831px;height:1px;background:#ebeef5"></div>
  <div class="td" style="left:9.5px;top:179px">4</div>
  <div class="td" style="left:401.5px;top:179px">202.88</div>
  <div class="td" style="left:547.5px;top:179px">12</div>
  <div class="td" style="left:693.5px;top:179px">12</div>
  <div class="abs" style="left:0;top:245px;width:831px;height:1px;background:#ebeef5"></div>
  <div class="td" style="left:9.5px;top:212px">5</div>
  <div class="td" style="left:401.5px;top:212px">152.91</div>
  <div class="td" style="left:547.5px;top:212px">9</div>
  <div class="td" style="left:693.5px;top:212px">3</div>
  <div class="abs" style="left:0;top:278px;width:831px;height:1px;background:#ebeef5"></div>
  <div class="td" style="left:9.5px;top:245px">6</div>
  <div class="td" style="left:401.5px;top:245px">149.95</div>
  <div class="td" style="left:547.5px;top:245px">9</div>
  <div class="td" style="left:693.5px;top:245px">5</div>
  </div>
  <div class="card" style="left:847px;top:571px;width:831px;height:259px;border-radius:6px 6px 0 0;overflow:visible">
  <div class="lbl" style="left:4.5px;top:10.299999999999955px;font-size:17px;line-height:24px;color:#1f2226">新品销量榜</div>
  <div class="lbl" style="left:291.5px;top:10px;font-size:11px;line-height:18px;color:#6c7076">新品上架时间</div><div class="sel" style="left:366.5px;top:4.399999999999977px;width:82px;height:29.6px;line-height:28px;padding-left:14px">自定义<svg class="chev" style="left:59px;top:8px" viewBox="0 0 12 12"><path d="M1.6 3.8 L6 8.2 L10.4 3.8" fill="none" stroke="#b4b8bf" stroke-width="1.1"/></svg></div><div class="sel" style="left:455px;top:4.399999999999977px;width:378.6px;height:29.6px;line-height:28px"><svg class="abs" style="left:5px;top:7px;width:13px;height:13px" viewBox="0 0 13 13"><rect x="1" y="2.2" width="11" height="9.6" rx="1" fill="none" stroke="#c0c4cc" stroke-width="1"/><path d="M1 5.2 H12 M3.8 1 V3.2 M9.2 1 V3.2 M3.4 7.4 H9.6 M3.4 9.6 H9.6" stroke="#c0c4cc" stroke-width="1" fill="none"/></svg><span class="abs" style="left:64.5px;top:0">2024-12-17</span><span class="abs" style="left:174.5px;top:0;color:#303133">至</span><span class="abs" style="left:231.5px;top:0">2025-03-18</span></div>
  <div class="abs" style="left:0;top:42px;width:831px;height:34px;background:#f7fafe;border-top:1px solid #e9edf4"></div>
  <div class="th" style="left:9.5px;top:42px;height:34px;line-height:33px">序号<svg class="sic" viewBox="0 0 10 10"><path d="M3.2 1 V8.6 M0.8 6.2 L3.2 8.8 M6.8 9 V1.4 M6.8 1.2 L9.2 3.8" fill="none" stroke="#303133" stroke-width="1.1"/></svg></div>
  <div class="th" style="left:109.5px;top:42px;height:34px;line-height:33px">图片<svg class="sic" viewBox="0 0 10 10"><path d="M3.2 1 V8.6 M0.8 6.2 L3.2 8.8 M6.8 9 V1.4 M6.8 1.2 L9.2 3.8" fill="none" stroke="#303133" stroke-width="1.1"/></svg></div>
  <div class="th" style="left:255.5px;top:42px;height:34px;line-height:33px">asin<svg class="sic" viewBox="0 0 10 10"><path d="M3.2 1 V8.6 M0.8 6.2 L3.2 8.8 M6.8 9 V1.4 M6.8 1.2 L9.2 3.8" fill="none" stroke="#303133" stroke-width="1.1"/></svg></div>
  <div class="th" style="left:401.5px;top:42px;height:34px;line-height:33px">销售额($)<svg class="sic" viewBox="0 0 10 10"><path d="M3.2 1 V8.6 M0.8 6.2 L3.2 8.8 M6.8 9 V1.4 M6.8 1.2 L9.2 3.8" fill="none" stroke="#303133" stroke-width="1.1"/></svg></div>
  <div class="th" style="left:547.5px;top:42px;height:34px;line-height:33px">销量<svg class="sic" style="width:12px;height:12px;margin-left:2.4px;vertical-align:-2.4px" viewBox="0 0 12 12"><path d="M0.3 1 H11.6 M0.3 6 H7.8 M0.3 11 H3.8" fill="none" stroke="#26282c" stroke-width="1.25"/></svg></div>
  <div class="th" style="left:693.5px;top:42px;height:34px;line-height:33px">订单量<svg class="sic" viewBox="0 0 10 10"><path d="M3.2 1 V8.6 M0.8 6.2 L3.2 8.8 M6.8 9 V1.4 M6.8 1.2 L9.2 3.8" fill="none" stroke="#303133" stroke-width="1.1"/></svg></div>
  <div class="abs" style="left:100px;top:76px;width:1px;height:183px;background:#ebeef5"></div>
  <div class="abs" style="left:246px;top:42px;width:1px;height:217px;background:#ebeef5"></div>
  <div class="abs" style="left:392px;top:42px;width:1px;height:217px;background:#ebeef5"></div>
  <div class="abs" style="left:538px;top:42px;width:1px;height:217px;background:#ebeef5"></div>
  <div class="abs" style="left:684px;top:42px;width:1px;height:217px;background:#ebeef5"></div>
  <div class="abs" style="left:830px;top:42px;width:1px;height:217px;background:#ebeef5"></div>
  <div class="abs" style="left:0;top:109px;width:831px;height:1px;background:#ebeef5"></div>
  <div class="td" style="left:9.5px;top:76px">1</div>
  <div class="td" style="left:401.5px;top:76px">202.88</div>
  <div class="td" style="left:547.5px;top:76px">12</div>
  <div class="td" style="left:693.5px;top:76px">12</div>
  <div class="abs" style="left:0;top:142px;width:831px;height:1px;background:#ebeef5"></div>
  <div class="td" style="left:9.5px;top:109px">2</div>
  <div class="td" style="left:401.5px;top:109px">84.95</div>
  <div class="td" style="left:547.5px;top:109px">5</div>
  <div class="td" style="left:693.5px;top:109px">5</div>
  <div class="abs" style="left:0;top:175px;width:831px;height:1px;background:#ebeef5"></div>
  <div class="td" style="left:9.5px;top:142px">3</div>
  <div class="td" style="left:401.5px;top:142px">33.98</div>
  <div class="td" style="left:547.5px;top:142px">2</div>
  <div class="td" style="left:693.5px;top:142px">2</div>
  <div class="abs" style="left:0;top:208px;width:831px;height:1px;background:#ebeef5"></div>
  <div class="td" style="left:9.5px;top:175px">4</div>
  <div class="td" style="left:401.5px;top:175px">15.99</div>
  <div class="td" style="left:547.5px;top:175px">1</div>
  <div class="abs" style="left:0;top:241px;width:831px;height:1px;background:#ebeef5"></div>
  <div class="td" style="left:9.5px;top:208px">5</div>
  <div class="td" style="left:401.5px;top:208px">14.99</div>
  <div class="td" style="left:547.5px;top:208px">1</div>
  <div class="abs" style="left:0;top:274px;width:831px;height:1px;background:#ebeef5"></div>
  <div class="td" style="left:9.5px;top:241px">6</div>
  <div class="td" style="left:401.5px;top:241px">16.99</div>
  <div class="td" style="left:547.5px;top:241px">1</div>
  <div class="td" style="left:693.5px;top:241px">1</div>
  </div>
  <i class="px" style="left:103px;top:656px;width:42px;height:174px;background:#fff"></i>
  <i class="px" style="left:108px;top:655px;width:12px;height:7px;background:#f0f0f0"></i>
  <i class="px" style="left:120px;top:655px;width:12px;height:7px;background:#d6d5d3"></i>
  <i class="px" style="left:132px;top:655px;width:12px;height:7px;background:#b3aeab"></i>
  <i class="px" style="left:108px;top:662px;width:12px;height:12px;background:#cccccc"></i>
  <i class="px" style="left:120px;top:662px;width:12px;height:12px;background:#949291"></i>
  <i class="px" style="left:132px;top:662px;width:12px;height:12px;background:#837c7a"></i>
  <i class="px" style="left:108px;top:674px;width:12px;height:12px;background:#f2f2f3"></i>
  <i class="px" style="left:120px;top:674px;width:12px;height:12px;background:#bdbdbe"></i>
  <i class="px" style="left:132px;top:674px;width:12px;height:12px;background:#e4e4e4"></i>
  <i class="px" style="left:108px;top:686px;width:12px;height:12px;background:#fbfaf9"></i>
  <i class="px" style="left:120px;top:686px;width:12px;height:12px;background:#c9b4a4"></i>
  <i class="px" style="left:132px;top:686px;width:12px;height:12px;background:#e8e2e1"></i>
  <i class="px" style="left:108px;top:698px;width:12px;height:12px;background:#fbfbfa"></i>
  <i class="px" style="left:120px;top:698px;width:12px;height:12px;background:#a39278"></i>
  <i class="px" style="left:132px;top:698px;width:12px;height:12px;background:#e1d2c6"></i>
  <i class="px" style="left:108px;top:710px;width:12px;height:12px;background:#fdfdfd"></i>
  <i class="px" style="left:120px;top:710px;width:12px;height:12px;background:#e4e6e9"></i>
  <i class="px" style="left:132px;top:710px;width:12px;height:12px;background:#dfdfe1"></i>
  <i class="px" style="left:108px;top:722px;width:12px;height:12px;background:#f6f5f3"></i>
  <i class="px" style="left:120px;top:722px;width:12px;height:12px;background:#9f897b"></i>
  <i class="px" style="left:132px;top:722px;width:12px;height:12px;background:#dbd3ce"></i>
  <i class="px" style="left:108px;top:734px;width:12px;height:12px;background:#fafaf9"></i>
  <i class="px" style="left:120px;top:734px;width:12px;height:12px;background:#a8978c"></i>
  <i class="px" style="left:132px;top:734px;width:12px;height:12px;background:#cbc1bc"></i>
  <i class="px" style="left:108px;top:746px;width:12px;height:12px;background:#f7f8fa"></i>
  <i class="px" style="left:120px;top:746px;width:12px;height:12px;background:#ededed"></i>
  <i class="px" style="left:132px;top:746px;width:12px;height:12px;background:#f3f0ef"></i>
  <i class="px" style="left:108px;top:758px;width:12px;height:12px;background:#cfdde8"></i>
  <i class="px" style="left:120px;top:758px;width:12px;height:12px;background:#8d90a6"></i>
  <i class="px" style="left:132px;top:758px;width:12px;height:12px;background:#b4bcc8"></i>
  <i class="px" style="left:108px;top:770px;width:12px;height:12px;background:#fafcfd"></i>
  <i class="px" style="left:120px;top:770px;width:12px;height:12px;background:#c9d1dd"></i>
  <i class="px" style="left:132px;top:770px;width:12px;height:12px;background:#dedfe3"></i>
  <i class="px" style="left:108px;top:782px;width:12px;height:12px;background:#fafafa"></i>
  <i class="px" style="left:120px;top:782px;width:12px;height:12px;background:#e8e8e4"></i>
  <i class="px" style="left:132px;top:782px;width:12px;height:12px;background:#f8f8f8"></i>
  <i class="px" style="left:108px;top:794px;width:12px;height:12px;background:#fdfdfd"></i>
  <i class="px" style="left:120px;top:794px;width:12px;height:12px;background:#e9e9e7"></i>
  <i class="px" style="left:132px;top:794px;width:12px;height:12px;background:#ededeb"></i>
  <i class="px" style="left:108px;top:806px;width:12px;height:12px;background:#fdfdfd"></i>
  <i class="px" style="left:120px;top:806px;width:12px;height:12px;background:#f6f6f6"></i>
  <i class="px" style="left:132px;top:806px;width:12px;height:12px;background:#f8f8f8"></i>
  <i class="px" style="left:108px;top:818px;width:12px;height:12px;background:#fcfcfc"></i>
  <i class="px" style="left:120px;top:818px;width:12px;height:12px;background:#e8e0d6"></i>
  <i class="px" style="left:132px;top:818px;width:12px;height:12px;background:#f0f0f0"></i>
  <i class="px" style="left:257px;top:662px;width:7px;height:12px;background:#ececec"></i>
  <i class="px" style="left:264px;top:662px;width:12px;height:12px;background:#cfcfcf"></i>
  <i class="px" style="left:276px;top:662px;width:12px;height:12px;background:#d3d3d3"></i>
  <i class="px" style="left:288px;top:662px;width:12px;height:12px;background:#d9d9d9"></i>
  <i class="px" style="left:300px;top:662px;width:12px;height:12px;background:#d7d7d7"></i>
  <i class="px" style="left:312px;top:662px;width:12px;height:12px;background:#dadada"></i>
  <i class="px" style="left:324px;top:662px;width:12px;height:12px;background:#ededed"></i>
  <i class="px" style="left:257px;top:686px;width:7px;height:12px;background:#fafafa"></i>
  <i class="px" style="left:264px;top:686px;width:12px;height:12px;background:#f6f6f6"></i>
  <i class="px" style="left:276px;top:686px;width:12px;height:12px;background:#f7f7f7"></i>
  <i class="px" style="left:288px;top:686px;width:12px;height:12px;background:#f8f8f8"></i>
  <i class="px" style="left:300px;top:686px;width:12px;height:12px;background:#fafafa"></i>
  <i class="px" style="left:312px;top:686px;width:12px;height:12px;background:#fcfcfc"></i>
  <i class="px" style="left:324px;top:686px;width:12px;height:12px;background:#ffffff"></i>
  <i class="px" style="left:257px;top:698px;width:7px;height:12px;background:#f0f0f0"></i>
  <i class="px" style="left:264px;top:698px;width:12px;height:12px;background:#dbdbdb"></i>
  <i class="px" style="left:276px;top:698px;width:12px;height:12px;background:#e6e6e6"></i>
  <i class="px" style="left:288px;top:698px;width:12px;height:12px;background:#d8d8d8"></i>
  <i class="px" style="left:300px;top:698px;width:12px;height:12px;background:#dcdcdc"></i>
  <i class="px" style="left:312px;top:698px;width:12px;height:12px;background:#dfdfdf"></i>
  <i class="px" style="left:324px;top:698px;width:12px;height:12px;background:#f3f3f3"></i>
  <i class="px" style="left:252px;top:722px;width:12px;height:12px;background:#f1f1f1"></i>
  <i class="px" style="left:264px;top:722px;width:12px;height:12px;background:#e1e1e1"></i>
  <i class="px" style="left:276px;top:722px;width:12px;height:12px;background:#e9e9e9"></i>
  <i class="px" style="left:288px;top:722px;width:12px;height:12px;background:#d8d8d8"></i>
  <i class="px" style="left:300px;top:722px;width:12px;height:12px;background:#e2e2e2"></i>
  <i class="px" style="left:312px;top:722px;width:12px;height:12px;background:#e3e3e3"></i>
  <i class="px" style="left:324px;top:722px;width:12px;height:12px;background:#eaeaea"></i>
  <i class="px" style="left:252px;top:734px;width:12px;height:12px;background:#f7f7f7"></i>
  <i class="px" style="left:264px;top:734px;width:12px;height:12px;background:#ececec"></i>
  <i class="px" style="left:276px;top:734px;width:12px;height:12px;background:#ececec"></i>
  <i class="px" style="left:288px;top:734px;width:12px;height:12px;background:#f1f1f1"></i>
  <i class="px" style="left:300px;top:734px;width:12px;height:12px;background:#f1f1f1"></i>
  <i class="px" style="left:312px;top:734px;width:12px;height:12px;background:#ececec"></i>
  <i class="px" style="left:324px;top:734px;width:12px;height:12px;background:#f3f3f3"></i>
  <i class="px" style="left:257px;top:758px;width:7px;height:12px;background:#ebebeb"></i>
  <i class="px" style="left:264px;top:758px;width:12px;height:12px;background:#cccccc"></i>
  <i class="px" style="left:276px;top:758px;width:12px;height:12px;background:#d6d6d6"></i>
  <i class="px" style="left:288px;top:758px;width:12px;height:12px;background:#d6d6d6"></i>
  <i class="px" style="left:300px;top:758px;width:12px;height:12px;background:#d0d0d0"></i>
  <i class="px" style="left:312px;top:758px;width:12px;height:12px;background:#d3d3d3"></i>
  <i class="px" style="left:324px;top:758px;width:12px;height:12px;background:#e9e9e9"></i>
  <i class="px" style="left:257px;top:794px;width:7px;height:12px;background:#ececec"></i>
  <i class="px" style="left:264px;top:794px;width:12px;height:12px;background:#d2d2d2"></i>
  <i class="px" style="left:276px;top:794px;width:12px;height:12px;background:#d9d9d9"></i>
  <i class="px" style="left:288px;top:794px;width:12px;height:12px;background:#cecece"></i>
  <i class="px" style="left:300px;top:794px;width:12px;height:12px;background:#dbdbdb"></i>
  <i class="px" style="left:312px;top:794px;width:12px;height:12px;background:#d5d5d5"></i>
  <i class="px" style="left:324px;top:794px;width:12px;height:12px;background:#e4e4e4"></i>
  <i class="px" style="left:950px;top:648px;width:38px;height:182px;background:#fff"></i>
  <i class="px" style="left:960px;top:650px;width:12px;height:12px;background:#b6bbd0"></i>
  <i class="px" style="left:972px;top:650px;width:12px;height:12px;background:#cbcedb"></i>
  <i class="px" style="left:960px;top:662px;width:12px;height:12px;background:#94a8ba"></i>
  <i class="px" style="left:972px;top:662px;width:12px;height:12px;background:#a8b0bd"></i>
  <i class="px" style="left:960px;top:674px;width:12px;height:12px;background:#fdfdfd"></i>
  <i class="px" style="left:972px;top:674px;width:12px;height:12px;background:#fdfdfd"></i>
  <i class="px" style="left:960px;top:686px;width:12px;height:12px;background:#70665c"></i>
  <i class="px" style="left:972px;top:686px;width:12px;height:12px;background:#b89f8e"></i>
  <i class="px" style="left:960px;top:698px;width:12px;height:12px;background:#b6a89e"></i>
  <i class="px" style="left:972px;top:698px;width:12px;height:12px;background:#d9d0c8"></i>
  <i class="px" style="left:960px;top:710px;width:12px;height:12px;background:#e3e3e1"></i>
  <i class="px" style="left:972px;top:710px;width:12px;height:12px;background:#f6f5f1"></i>
  <i class="px" style="left:960px;top:722px;width:12px;height:12px;background:#6b6050"></i>
  <i class="px" style="left:972px;top:722px;width:12px;height:12px;background:#958b79"></i>
  <i class="px" style="left:960px;top:734px;width:12px;height:12px;background:#ded6c5"></i>
  <i class="px" style="left:972px;top:734px;width:12px;height:12px;background:#d3d6d1"></i>
  <i class="px" style="left:960px;top:746px;width:12px;height:12px;background:#cbd2cb"></i>
  <i class="px" style="left:972px;top:746px;width:12px;height:12px;background:#cbd1cb"></i>
  <i class="px" style="left:960px;top:758px;width:12px;height:12px;background:#70806a"></i>
  <i class="px" style="left:972px;top:758px;width:12px;height:12px;background:#7a8773"></i>
  <i class="px" style="left:960px;top:770px;width:12px;height:12px;background:#dadedb"></i>
  <i class="px" style="left:972px;top:770px;width:12px;height:12px;background:#dbe0dc"></i>
  <i class="px" style="left:960px;top:782px;width:12px;height:12px;background:#b0a096"></i>
  <i class="px" style="left:972px;top:782px;width:12px;height:12px;background:#c1b6ae"></i>
  <i class="px" style="left:960px;top:794px;width:12px;height:12px;background:#928d89"></i>
  <i class="px" style="left:972px;top:794px;width:12px;height:12px;background:#aba6a3"></i>
  <i class="px" style="left:960px;top:806px;width:12px;height:12px;background:#e9e8e6"></i>
  <i class="px" style="left:972px;top:806px;width:12px;height:12px;background:#efefed"></i>
  <i class="px" style="left:960px;top:818px;width:12px;height:12px;background:#afaeb2"></i>
  <i class="px" style="left:972px;top:818px;width:12px;height:12px;background:#bebec2"></i>
  <i class="px" style="left:949px;top:662px;width:11px;height:12px;background:#f0f5f8"></i>
  <i class="px" style="left:949px;top:686px;width:11px;height:12px;background:#e8ebea"></i>
  <i class="px" style="left:949px;top:722px;width:11px;height:12px;background:#eeebe7"></i>
  <i class="px" style="left:954px;top:746px;width:6px;height:12px;background:#eef2ef"></i>
  <i class="px" style="left:954px;top:758px;width:6px;height:12px;background:#e0e4e0"></i>
  <i class="px" style="left:1102px;top:806px;width:76px;height:24px;background:#fff"></i>
  <i class="px" style="left:1104px;top:653px;width:12px;height:9px;background:#ececec"></i>
  <i class="px" style="left:1116px;top:653px;width:12px;height:9px;background:#ededed"></i>
  <i class="px" style="left:1128px;top:653px;width:12px;height:9px;background:#efefef"></i>
  <i class="px" style="left:1140px;top:653px;width:12px;height:9px;background:#ededed"></i>
  <i class="px" style="left:1152px;top:653px;width:12px;height:9px;background:#f1f1f1"></i>
  <i class="px" style="left:1164px;top:653px;width:12px;height:9px;background:#f3f3f3"></i>
  <i class="px" style="left:1104px;top:662px;width:12px;height:12px;background:#dfdfdf"></i>
  <i class="px" style="left:1116px;top:662px;width:12px;height:12px;background:#e1e1e1"></i>
  <i class="px" style="left:1128px;top:662px;width:12px;height:12px;background:#e5e5e5"></i>
  <i class="px" style="left:1140px;top:662px;width:12px;height:12px;background:#e1e1e1"></i>
  <i class="px" style="left:1152px;top:662px;width:12px;height:12px;background:#e3e3e3"></i>
  <i class="px" style="left:1164px;top:662px;width:12px;height:12px;background:#e7e7e7"></i>
  <i class="px" style="left:1104px;top:686px;width:12px;height:12px;background:#d9d9d9"></i>
  <i class="px" style="left:1116px;top:686px;width:12px;height:12px;background:#dfdfdf"></i>
  <i class="px" style="left:1128px;top:686px;width:12px;height:12px;background:#e2e2e2"></i>
  <i class="px" style="left:1140px;top:686px;width:12px;height:12px;background:#dadada"></i>
  <i class="px" style="left:1152px;top:686px;width:12px;height:12px;background:#e4e4e4"></i>
  <i class="px" style="left:1164px;top:686px;width:12px;height:12px;background:#e4e4e4"></i>
  <i class="px" style="left:1104px;top:698px;width:12px;height:12px;background:#eeeeee"></i>
  <i class="px" style="left:1116px;top:698px;width:12px;height:12px;background:#f0f0f0"></i>
  <i class="px" style="left:1128px;top:698px;width:12px;height:12px;background:#f2f2f2"></i>
  <i class="px" style="left:1140px;top:698px;width:12px;height:12px;background:#f8f8f8"></i>
  <i class="px" style="left:1152px;top:698px;width:12px;height:12px;background:#f2f2f2"></i>
  <i class="px" style="left:1164px;top:698px;width:12px;height:12px;background:#f3f3f3"></i>
  <i class="px" style="left:1104px;top:722px;width:12px;height:12px;background:#cbcbcb"></i>
  <i class="px" style="left:1116px;top:722px;width:12px;height:12px;background:#d0d0d0"></i>
  <i class="px" style="left:1128px;top:722px;width:12px;height:12px;background:#d3d3d3"></i>
  <i class="px" style="left:1140px;top:722px;width:12px;height:12px;background:#d1d1d1"></i>
  <i class="px" style="left:1152px;top:722px;width:12px;height:12px;background:#d6d6d6"></i>
  <i class="px" style="left:1164px;top:722px;width:12px;height:12px;background:#dedede"></i>
  <i class="px" style="left:1104px;top:758px;width:12px;height:12px;background:#cbcbcb"></i>
  <i class="px" style="left:1116px;top:758px;width:12px;height:12px;background:#d5d5d5"></i>
  <i class="px" style="left:1128px;top:758px;width:12px;height:12px;background:#d8d8d8"></i>
  <i class="px" style="left:1140px;top:758px;width:12px;height:12px;background:#d9d9d9"></i>
  <i class="px" style="left:1152px;top:758px;width:12px;height:12px;background:#dadada"></i>
  <i class="px" style="left:1164px;top:758px;width:12px;height:12px;background:#eeeeee"></i>
  <i class="px" style="left:1104px;top:782px;width:12px;height:12px;background:#e9e9e9"></i>
  <i class="px" style="left:1116px;top:782px;width:12px;height:12px;background:#ececec"></i>
  <i class="px" style="left:1128px;top:782px;width:12px;height:12px;background:#efefef"></i>
  <i class="px" style="left:1140px;top:782px;width:12px;height:12px;background:#f1f1f1"></i>
  <i class="px" style="left:1152px;top:782px;width:12px;height:12px;background:#efefef"></i>
  <i class="px" style="left:1164px;top:782px;width:12px;height:12px;background:#f2f2f2"></i>
  <i class="px" style="left:1104px;top:794px;width:12px;height:12px;background:#dedede"></i>
  <i class="px" style="left:1116px;top:794px;width:12px;height:12px;background:#e3e3e3"></i>
  <i class="px" style="left:1128px;top:794px;width:12px;height:12px;background:#e5e5e5"></i>
  <i class="px" style="left:1140px;top:794px;width:12px;height:12px;background:#e5e5e5"></i>
  <i class="px" style="left:1152px;top:794px;width:12px;height:12px;background:#e6e6e6"></i>
  <i class="px" style="left:1164px;top:794px;width:12px;height:12px;background:#ebebeb"></i>
  <i class="px" style="left:1104px;top:818px;width:12px;height:12px;background:#e7e8ec"></i>
  <i class="px" style="left:1116px;top:818px;width:12px;height:12px;background:#e9eaee"></i>
  <i class="px" style="left:1128px;top:818px;width:12px;height:12px;background:#ebecf0"></i>
  <i class="px" style="left:1140px;top:818px;width:12px;height:12px;background:#ebecf0"></i>
  <i class="px" style="left:1152px;top:818px;width:12px;height:12px;background:#ecedf1"></i>
  <i class="px" style="left:1164px;top:818px;width:12px;height:12px;background:#eeeff3"></i>
  <i class="px" style="left:1416px;top:758px;width:204px;height:46px;background:#fdfdfd"></i>
  <i class="px" style="left:1416px;top:758px;width:12px;height:12px;background:#ebebeb"></i>
  <i class="px" style="left:1428px;top:758px;width:12px;height:12px;background:#f0f0f0"></i>
  <i class="px" style="left:1440px;top:758px;width:12px;height:12px;background:#f0f0f0"></i>
  <i class="px" style="left:1452px;top:758px;width:12px;height:12px;background:#f5f5f5"></i>
  <i class="px" style="left:1464px;top:758px;width:12px;height:12px;background:#eeeeee"></i>
  <i class="px" style="left:1476px;top:758px;width:12px;height:12px;background:#f0f0f0"></i>
  <i class="px" style="left:1488px;top:758px;width:12px;height:12px;background:#f1f1f1"></i>
  <i class="px" style="left:1500px;top:758px;width:12px;height:12px;background:#eeeeee"></i>
  <i class="px" style="left:1512px;top:758px;width:12px;height:12px;background:#f1f1f1"></i>
  <i class="px" style="left:1524px;top:758px;width:12px;height:12px;background:#f0f0f0"></i>
  <i class="px" style="left:1536px;top:758px;width:12px;height:12px;background:#e2e2e2"></i>
  <i class="px" style="left:1416px;top:770px;width:12px;height:12px;background:#f0f0f0"></i>
  <i class="px" style="left:1428px;top:770px;width:12px;height:12px;background:#f1f1f1"></i>
  <i class="px" style="left:1440px;top:770px;width:12px;height:12px;background:#f3f3f3"></i>
  <i class="px" style="left:1452px;top:770px;width:12px;height:12px;background:#f6f6f6"></i>
  <i class="px" style="left:1464px;top:770px;width:12px;height:12px;background:#f2f2f2"></i>
  <i class="px" style="left:1476px;top:770px;width:12px;height:12px;background:#f4f4f4"></i>
  <i class="px" style="left:1488px;top:770px;width:12px;height:12px;background:#f3f3f3"></i>
  <i class="px" style="left:1500px;top:770px;width:12px;height:12px;background:#f2f2f2"></i>
  <i class="px" style="left:1512px;top:770px;width:12px;height:12px;background:#f2f2f2"></i>
  <i class="px" style="left:1524px;top:770px;width:12px;height:12px;background:#f2f2f2"></i>
  <i class="px" style="left:1536px;top:770px;width:12px;height:12px;background:#f1f1f1"></i>
  <i class="px" style="left:1416px;top:782px;width:12px;height:12px;background:#ebebeb"></i>
  <i class="px" style="left:1428px;top:782px;width:12px;height:12px;background:#f0f0f0"></i>
  <i class="px" style="left:1440px;top:782px;width:12px;height:12px;background:#f1f1f1"></i>
  <i class="px" style="left:1452px;top:782px;width:12px;height:12px;background:#ececec"></i>
  <i class="px" style="left:1464px;top:782px;width:12px;height:12px;background:#e8e8e8"></i>
  <i class="px" style="left:1476px;top:782px;width:12px;height:12px;background:#f1f1f1"></i>
  <i class="px" style="left:1488px;top:782px;width:12px;height:12px;background:#f1f1f1"></i>
  <i class="px" style="left:1500px;top:782px;width:12px;height:12px;background:#ebebeb"></i>
  <i class="px" style="left:1512px;top:782px;width:12px;height:12px;background:#ebebeb"></i>
  <i class="px" style="left:1524px;top:782px;width:12px;height:12px;background:#efefef"></i>
  <i class="px" style="left:1536px;top:782px;width:12px;height:12px;background:#e9e9e9"></i>
  <i class="px" style="left:1548px;top:782px;width:12px;height:12px;background:#eeeeee"></i>
  <i class="px" style="left:1560px;top:782px;width:12px;height:12px;background:#f0f0f0"></i>
  <i class="px" style="left:1572px;top:782px;width:12px;height:12px;background:#f0f0f0"></i>
  <i class="px" style="left:1584px;top:782px;width:12px;height:12px;background:#f1f1f1"></i>
  <i class="px" style="left:1596px;top:782px;width:12px;height:12px;background:#f4f4f4"></i>
  <i class="px" style="left:1416px;top:794px;width:12px;height:10px;background:#f3f3f3"></i>
  <i class="px" style="left:1428px;top:794px;width:12px;height:10px;background:#f5f5f5"></i>
  <i class="px" style="left:1440px;top:794px;width:12px;height:10px;background:#f6f6f6"></i>
  <i class="px" style="left:1452px;top:794px;width:12px;height:10px;background:#f3f3f3"></i>
  <i class="px" style="left:1464px;top:794px;width:12px;height:10px;background:#f4f4f4"></i>
  <i class="px" style="left:1476px;top:794px;width:12px;height:10px;background:#f7f7f7"></i>
  <i class="px" style="left:1488px;top:794px;width:12px;height:10px;background:#f5f5f5"></i>
  <i class="px" style="left:1500px;top:794px;width:12px;height:10px;background:#f2f2f2"></i>
  <i class="px" style="left:1512px;top:794px;width:12px;height:10px;background:#f3f3f3"></i>
  <i class="px" style="left:1524px;top:794px;width:12px;height:10px;background:#f4f4f4"></i>
  <i class="px" style="left:1536px;top:794px;width:12px;height:10px;background:#f1f1f1"></i>
  <i class="px" style="left:1548px;top:794px;width:12px;height:10px;background:#f5f5f5"></i>
  <i class="px" style="left:1560px;top:794px;width:12px;height:10px;background:#f5f5f5"></i>
  <i class="px" style="left:1572px;top:794px;width:12px;height:10px;background:#f6f6f6"></i>
  <i class="px" style="left:1584px;top:794px;width:12px;height:10px;background:#f6f6f6"></i>
  <i class="px" style="left:1596px;top:794px;width:12px;height:10px;background:#f8f8f8"></i>
  <div class="abs" style="left:829.5px;top:652px;width:6px;height:126.5px;border-radius:3px;background:#cdcdcd"></div>
  <div class="abs" style="left:1672px;top:648px;width:6px;height:190px;border-radius:3px;background:#d0d0d0"></div>
  <div class="abs" style="left:1697px;top:65px;width:6px;height:626px;border-radius:3px;background:#d3d7e1"></div>
  <!--CT-END-->
</div>
<!--OVERLAYS-->
</body>
</html>
